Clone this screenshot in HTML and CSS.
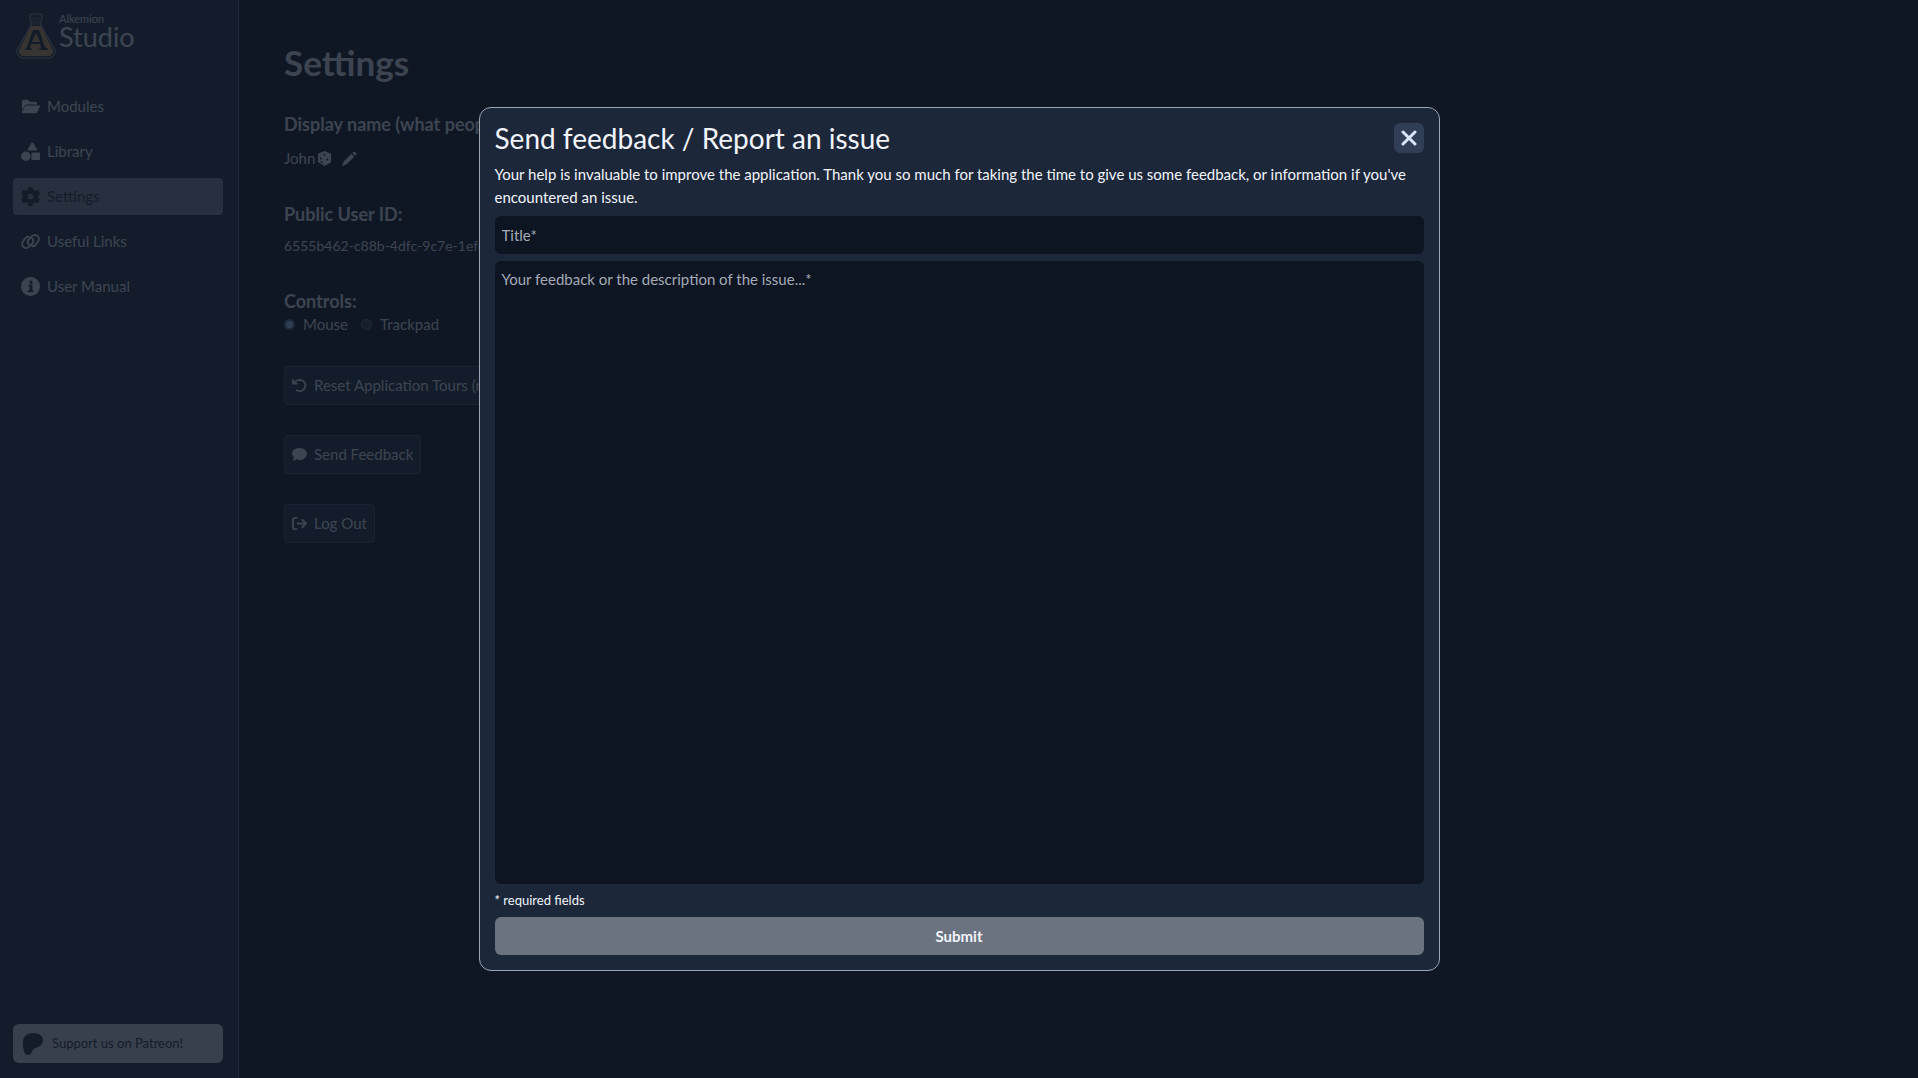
FILE: index.html
```html
<!DOCTYPE html>
<html lang="en">
<head>
    <meta charset="UTF-8">
    <title>Alkemion Studio</title>
    <link rel="stylesheet" href="styles.css">
</head>
<body>
<div class="app">
    <aside class="sidebar">
        <a class="logo" href="#">
            <svg class="flask" viewBox="0 0 40 46">
                <path class="flask-line" d="M14 1h12v3l-1 2v6l14 25q1 3-2 6l-3 2H6l-3-2q-3-3-2-6l14-25V6l-1-2z"/>
                <path class="flask-neck" d="M16 4h8v8h-8z"/>
                <path class="flask-liquid" d="M15 13h10l12 24q1 3-3 6H6q-4-3-3-6z"/>
                <path class="flask-mark" d="M17 17h6l6 17 3 2v1h-9v-1l2-1-1-4h-9l-1 4 2 1v1H9v-1l2-2zM20 20l-4 9h8z"/>
            </svg>
            <span class="brand"><small>Alkemion</small><span>Studio</span></span>
        </a>
        <nav class="menu">
            <a class="menu-item" href="#">
                <svg class="icon" viewBox="0 0 20 20"><path d="M1 14V5q0-2 2-2h4l2 2h6q2 0 2 2v1H6q-1 0-2 1z"/><path d="M6 9h13q1 0 1 1l-3 6q0 1-2 1H2q-1 0-1-1l3-6q1-1 2-1z"/></svg>
                Modules
            </a>
            <a class="menu-item" href="#">
                <svg class="icon" viewBox="0 0 20 20"><path d="M11 1q1-1 2 0l4 7q0 1-1 1H8q-1 0-1-1z"/><circle cx="5" cy="15" r="5"/><rect x="11" y="11" width="9" height="8" rx="1"/></svg>
                Library
            </a>
            <a class="menu-item active" href="#">
                <svg class="icon" viewBox="0 0 20 20"><path fill-rule="evenodd" d="M8 0h4l1 3 2 1 3-1 2 4-2 2v2l2 2-2 4-3-1-2 1-1 3H8l-1-3-2-1-3 1-2-4 2-2V9L0 7l2-4 3 1 2-1zM10 7a3 3 0 1 0 0 6 3 3 0 0 0 0-6z"/></svg>
                Settings
            </a>
            <a class="menu-item" href="#">
                <svg class="icon stroke" viewBox="0 0 20 20"><path d="M8 13a4 4 0 0 1 0-5l3-3a4 4 0 0 1 7 5l-3 4a4 4 0 0 1-3 1"/><path d="M12 7a4 4 0 0 1 0 5l-3 3a4 4 0 0 1-7-5l3-4a4 4 0 0 1 3-1"/></svg>
                Useful Links
            </a>
            <a class="menu-item" href="#">
                <svg class="icon" viewBox="0 0 20 20"><path fill-rule="evenodd" d="M10 0a10 10 0 1 0 0 20 10 10 0 0 0 0-20zM9 4h3v3H9zM8 8h4v6h1v2H7v-2h2v-4H8z"/></svg>
                User Manual
            </a>
        </nav>
        <a class="patreon" href="#">
            <svg class="patreon-icon" viewBox="0 0 22 24"><path d="M1 8Q3 1 11 1q9 0 10 7 0 5-5 7-4 1-5 3-2 5-5 5-3 0-4-4-2-6-1-11z"/></svg>
            Support us on Patreon!
        </a>
    </aside>

    <main class="settings">
        <h1>Settings</h1>
        <section>
            <h2>Display name (what people</h2>
            <div class="name">
                <span>John</span>
                <svg class="icon-small" viewBox="0 0 16 16"><path fill-rule="evenodd" d="M8 0l7 3v9l-7 4-7-4V3zM8 3a1 1 0 1 0 0 2 1 1 0 0 0 0-2zM4 7a1 1 0 1 0 0 2 1 1 0 0 0 0-2zM5 11a1 1 0 1 0 0 2 1 1 0 0 0 0-2zM11 8a1 1 0 1 0 0 2 1 1 0 0 0 0-2z"/></svg>
                <button class="edit" type="button" aria-label="Edit display name">
                    <svg class="icon-small" viewBox="0 0 16 16"><path d="M11 2l1-1q1-1 2 0l1 1q1 1 0 2l-1 1zM10 3l3 3-8 8-5 2 2-5z"/></svg>
                </button>
            </div>
        </section>
        <section>
            <h2>Public User ID:</h2>
            <p>6555b462-c88b-4dfc-9c7e-1efc</p>
        </section>
        <section>
            <h2>Controls:</h2>
            <div class="controls">
                <label><input type="radio" name="controls" checked>Mouse</label>
                <label><input type="radio" name="controls">Trackpad</label>
            </div>
        </section>
        <div class="actions">
            <button class="action" type="button">
                <svg class="icon-small stroke" viewBox="0 0 16 16"><path d="M1 2v4h4M2 6q2-4 7-4a6 6 0 1 1-4 11"/></svg>
                Reset Application Tours (re
            </button>
            <button class="action" type="button">
                <svg class="icon-small" viewBox="0 0 16 16"><path d="M8 1c5 0 8 3 8 6s-3 7-8 7l-3-1-4 2 1-4q-2-2-2-4c0-3 3-6 8-6z"/></svg>
                Send Feedback
            </button>
            <button class="action" type="button">
                <svg class="icon-small stroke" viewBox="0 0 16 16"><path d="M5 2H3Q1 2 1 4v8q0 2 2 2h2M6 8h9M11 4l4 4-4 4"/></svg>
                Log Out
            </button>
        </div>
    </main>
</div>

<div class="overlay">
    <form class="modal" role="dialog" aria-labelledby="modal-title">
        <div class="modal-header">
            <h2 id="modal-title">Send feedback / Report an issue</h2>
            <button class="close" type="button" aria-label="Close">
                <svg viewBox="0 0 16 16"><path d="M2 2l12 12M14 2L2 14"/></svg>
            </button>
        </div>
        <p class="intro">Your help is invaluable to improve the application. Thank you so much for taking the time to give us some feedback, or information if you've encountered an issue.</p>
        <input class="field" type="text" placeholder="Title*" aria-label="Title">
        <textarea class="field message" placeholder="Your feedback or the description of the issue...*" aria-label="Your feedback or the description of the issue"></textarea>
        <p class="required">* required fields</p>
        <button class="submit" type="submit">Submit</button>
    </form>
</div>
</body>
</html>
```
FILE: styles.css
```css
*{
    box-sizing: border-box;
    padding: 0;
    margin: 0;
}
body{
    background: #121826;
    color: #a5b0bd;
    font-family: Lato, "Open Sans", sans-serif;
    font-size: 15px;
    line-height: 23px;
}
a{
    color: inherit;
    text-decoration: none;
}
button,input,textarea{
    font: inherit;
    color: inherit;
}
svg{
    fill: currentColor;
    flex-shrink: 0;
}
.stroke{
    fill: none;
    stroke: currentColor;
    stroke-width: 2;
    stroke-linecap: round;
    stroke-linejoin: round;
}
.app{
    display: flex;
    min-height: 100vh;
}

/* sidebar */
.sidebar{
    display: flex;
    flex-direction: column;
    width: 239px;
    padding: 13px 15px 15px 13px;
    background: #1e2b40;
    border-right: 1px solid #48566c;
}
.logo{
    display: flex;
    gap: 3px;
    padding-left: 3px;
    margin-bottom: 29px;
}
.flask{
    width: 40px;
    height: 46px;
}
.flask-line{
    fill: none;
    stroke: #77808d;
}
.flask-neck{
    fill: #38404e;
}
.flask-liquid{
    fill: #967a50;
}
.flask-mark{
    fill: #202b3b;
    fill-rule: evenodd;
}
.brand{
    display: flex;
    flex-direction: column;
}
.brand small{
    font-size: 11px;
    line-height: 12px;
}
.brand span{
    font-size: 27px;
    line-height: 24px;
}
.menu{
    display: flex;
    flex-direction: column;
    gap: 8px;
    flex: 1;
}
.menu-item{
    display: flex;
    align-items: center;
    gap: 7px;
    height: 37px;
    padding: 0 8px;
    border-radius: 4px;
}
.menu-item.active{
    background: #626a81;
    color: #202b3b;
}
.icon{
    width: 19px;
    height: 19px;
}
.patreon{
    display: flex;
    align-items: center;
    gap: 8px;
    height: 39px;
    padding: 0 9px;
    border-radius: 6px;
    background: #98a0b0;
    color: #202b3b;
    font-size: 13px;
}
.patreon-icon{
    width: 22px;
    height: 24px;
}

/* settings page */
.settings{
    flex: 1;
    padding: 38px 45px;
}
h1{
    margin-bottom: 26px;
    font-size: 35px;
    line-height: 48px;
}
h2{
    font-size: 18px;
    line-height: 24px;
}
section{
    margin-bottom: 32px;
}
.name{
    display: flex;
    align-items: center;
    gap: 2px;
    height: 34px;
    padding-top: 10px;
}
section p{
    padding-top: 8px;
    font-size: 14px;
}
.icon-small{
    width: 15px;
    height: 15px;
}
.edit{
    display: flex;
    margin-left: 8px;
    border: 0;
    background: none;
}
.controls{
    display: flex;
    gap: 13px;
}
.controls label{
    display: flex;
    align-items: center;
    gap: 8px;
}
.controls input{
    appearance: none;
    width: 11px;
    height: 11px;
    border: 1px solid #48515f;
    border-radius: 50%;
    background: #2b3442;
}
.controls input:checked{
    border: 2px solid #40597a;
    background: #7a9bb8;
}
.actions{
    display: flex;
    flex-direction: column;
    align-items: flex-start;
    gap: 30px;
    margin-top: -2px;
}
.action{
    display: flex;
    align-items: center;
    gap: 7px;
    height: 39px;
    padding: 0 7px;
    border: 1px solid #374255;
    border-radius: 4px;
    background: #1b283b;
}

/* feedback modal */
.overlay{
    position: fixed;
    inset: 0;
    display: flex;
    align-items: center;
    justify-content: center;
    background: rgba(15, 23, 36, .7);
}
.modal{
    display: flex;
    flex-direction: column;
    gap: 7px;
    width: calc(50% + 2px);
    height: calc(80% + 2px);
    padding: 15px;
    border: 1px solid #9aa5b8;
    border-radius: 12px;
    background: #1d273a;
    color: #f1f5fb;
}
.modal-header{
    display: flex;
    justify-content: space-between;
    height: 30px;
}
.modal-header h2{
    font-size: 28px;
    line-height: 30px;
    font-weight: 400;
}
.close{
    display: flex;
    align-items: center;
    justify-content: center;
    width: 30px;
    height: 30px;
    border: 0;
    border-radius: 6px;
    background: #303e56;
}
.close svg{
    width: 16px;
    height: 16px;
    stroke: #dbe6fb;
    stroke-width: 3;
    stroke-linecap: round;
}
.intro{
    margin-top: 3px;
}
.field{
    width: 100%;
    height: 38px;
    padding: 7px;
    border: 0;
    border-radius: 6px;
    outline: none;
    background: #0e1522;
}
.field::placeholder{
    color: #a4aab5;
}
.message{
    flex: 1;
    resize: none;
}
.required{
    font-size: 13px;
    line-height: 19px;
}
.submit{
    height: 38px;
    border: 0;
    border-radius: 6px;
    background: #6b7280;
    font-weight: 700;
}
```
